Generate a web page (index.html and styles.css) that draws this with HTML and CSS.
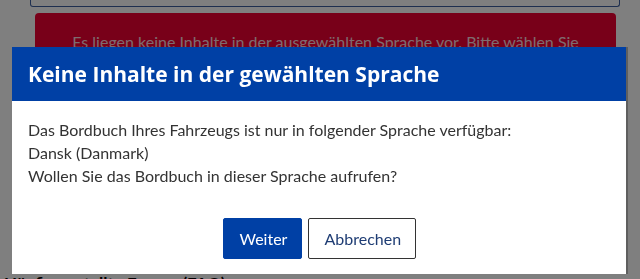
FILE: index.html
```html
<!DOCTYPE html>
<html lang="de">
  <head>
    <meta charset="UTF-8" />
    <meta name="viewport" content="width=device-width, initial-scale=1.0" />
    <title>Bordbuch</title>
    <link rel="stylesheet" href="styles.css">
  </head>
  <body>
    <div class="page">
      <div class="search-field"></div>
      <div class="alert">
        Es liegen keine Inhalte in der ausgewählten Sprache vor. Bitte wählen Sie
        eine andere Sprache aus.
      </div>
      <h3 class="faq-title">Häufig gestellte Fragen (FAQ)</h3>
    </div>

    <div class="backdrop"></div>

    <div class="modal" role="dialog" aria-labelledby="modal-title">
      <div class="modal-header">
        <h2 id="modal-title">Keine Inhalte in der gewählten Sprache</h2>
      </div>
      <div class="modal-body">
        <p>Das Bordbuch Ihres Fahrzeugs ist nur in folgender Sprache verfügbar:</p>
        <p>Dansk (Danmark)</p>
        <p>Wollen Sie das Bordbuch in dieser Sprache aufrufen?</p>
      </div>
      <div class="modal-footer">
        <button class="btn btn-primary">Weiter</button>
        <button class="btn btn-secondary">Abbrechen</button>
      </div>
    </div>
  </body>
</html>
```

FILE: styles.css
```css
html,
body {
  margin: 0;
  height: 100%;
  overflow: hidden;
}
body {
  font-family: Lato, "Liberation Sans", sans-serif;
  color: #333;
  background-color: #fff;
}
.page {
  padding: 0 16px 0 10px;
}
.search-field {
  margin: 0 4px 0 20px;
  height: 6px;
  border: 1px solid #3d5f9f;
  border-top: 0;
  border-radius: 0 0 3px 3px;
  background-color: #fff;
}
.alert {
  margin: 6px 8px 0 25px;
  height: 222px;
  padding: 19px 37px 0;
  border-radius: 4px;
  background-color: #f00033;
  color: #ffd6dd;
  font-size: 16px;
  line-height: 20px;
  text-align: center;
}
.faq-title {
  margin: 19px 0 0 -6px;
  font-size: 17px;
  font-weight: 700;
  color: #000;
}

/* modal layer */
.backdrop {
  position: fixed;
  inset: 0;
  background-color: rgba(0, 0, 0, 0.5);
}
.modal {
  position: fixed;
  top: 47px;
  left: 12px;
  width: 614px;
  height: 227px;
  display: flex;
  flex-direction: column;
  background-color: #fff;
  box-shadow: 2px 0 0 rgba(0, 0, 0, 0.25);
}
.modal-header {
  height: 54px;
  display: flex;
  align-items: center;
  padding: 0 16px;
  background-color: #0040a5;
}
.modal-header h2 {
  margin: 0;
  color: #fff;
  font-family: "Open Sans", Lato, sans-serif;
  font-size: 21px;
  font-weight: 700;
}
.modal-body {
  padding: 17px 16px 0;
  font-size: 16px;
  line-height: 23px;
}
.modal-body p {
  margin: 0;
}
.modal-footer {
  display: flex;
  justify-content: center;
  gap: 6px;
  margin-top: 31px;
}
.btn {
  height: 41px;
  padding: 0 16px;
  border-radius: 2px;
  font-family: inherit;
  font-size: 16px;
  cursor: pointer;
}
.btn-primary {
  width: 79px;
  border: 1px solid #0040a5;
  background-color: #0040a5;
  color: #fff;
}
.btn-secondary {
  width: 108px;
  border: 1px solid #333;
  background-color: #fff;
  color: #1f3d74;
}
```
